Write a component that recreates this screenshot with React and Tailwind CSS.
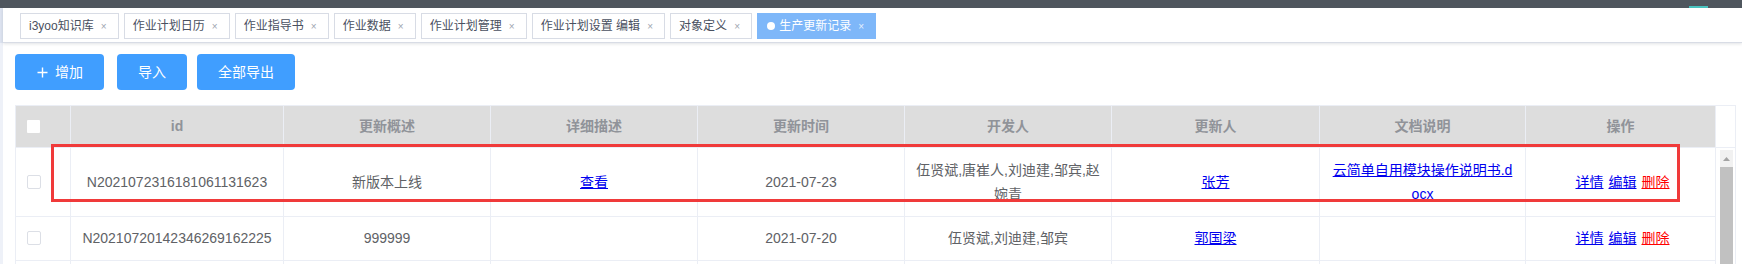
import React from "react";

const FONT = { fontFamily: '"Liberation Sans", "Noto Sans CJK SC", sans-serif' };

const tabs = [
  { label: "i3yoo知识库" },
  { label: "作业计划日历" },
  { label: "作业指导书" },
  { label: "作业数据" },
  { label: "作业计划管理" },
  { label: "作业计划设置 编辑" },
  { label: "对象定义" },
];

const COLS = "grid grid-cols-[55px_213px_207px_207px_207px_207px_208px_206px_190px]";
const headers = ["id", "更新概述", "详细描述", "更新时间", "开发人", "更新人", "文档说明", "操作"];

function Link({ children, red }) {
  return (
    <a
      href="#"
      className={
        "underline " + (red ? "text-[#ff0000]" : "text-[#0000ee]")
      }
    >
      {children}
    </a>
  );
}

function Cell({ children, h }) {
  return (
    <div className="flex items-center justify-center border-r border-b border-[#ebeef5] px-[10px] py-[10px] text-center leading-[24px] break-all">
      <span className="block w-full">{children}</span>
    </div>
  );
}

function CheckCell() {
  return (
    <div className="flex items-center border-r border-b border-[#ebeef5] pl-[11px]">
      <span className="block w-[14px] h-[14px] rounded-[2px] border border-[#dcdfe6] bg-white" />
    </div>
  );
}

function Actions() {
  return (
    <div className="flex items-center justify-center border-r border-b border-[#ebeef5] gap-[5px] pl-[4px]">
      <Link>详情</Link>
      <Link>编辑</Link>
      <Link red>删除</Link>
    </div>
  );
}

export default function App() {
  return (
    <div className="relative w-[1742px] h-[264px] overflow-hidden bg-white" style={FONT}>
      {/* top dark bar */}
      <div className="relative h-[8px] bg-[#4f565e]">
        <div className="absolute right-[34px] bottom-0 w-[19px] h-[2px] bg-[#47c2be]" />
      </div>

      <div className="flex">
        {/* left strip */}
        <div className="flex w-[3px] flex-col">
          <div className="h-[35px] bg-[#dde3f0]" />
          <div className="h-[230px] bg-[#eef1f8]" />
        </div>

        <div className="min-w-0 flex-1">
          {/* tabs bar */}
          <div className="flex h-[35px] items-start gap-[5px] border-b border-[#d8dce5] bg-white pl-[17px] pt-[5px] shadow-[0_1px_3px_0_rgba(0,21,41,0.12)]">
            {tabs.map((t) => (
              <div
                key={t.label}
                className="flex h-[26px] items-center whitespace-pre border border-[#d8dce5] bg-white pl-[8px] pr-[7px] text-[12px] text-[#495060]"
              >
                <span>{t.label}</span>
                <span className="ml-[3px] w-[14px] text-center text-[10px] text-[#a0a6b0]">×</span>
              </div>
            ))}
            <div className="flex h-[26px] items-center border border-[#7eb7f9] bg-[#7eb7f9] pl-[9px] pr-[7px] text-[12px] text-white">
              <span className="mr-[4px] block h-[8px] w-[8px] rounded-full bg-white" />
              <span>生产更新记录</span>
              <span className="ml-[3px] w-[14px] text-center text-[10px] text-[#e6f0fd]">×</span>
            </div>
          </div>

          {/* content */}
          <div className="pl-[12px]">
            {/* buttons */}
            <div className="mt-[11px] flex h-[36px] items-stretch">
              <button className="flex w-[89px] items-center rounded-[4px] bg-[#409eff] pl-[22px] text-[14px] text-white">
                <svg width="11" height="11" viewBox="0 0 11 11" className="mr-[7px]">
                  <path d="M5.5 0.5 V10.5 M0.5 5.5 H10.5" stroke="white" strokeWidth="1.4" />
                </svg>
                <span>增加</span>
              </button>
              <button className="ml-[13px] flex w-[70px] items-center justify-center rounded-[4px] bg-[#409eff] text-[14px] text-white">
                导入
              </button>
              <button className="ml-[10px] flex w-[98px] items-center justify-center rounded-[4px] bg-[#409eff] text-[14px] text-white">
                全部导出
              </button>
            </div>

            {/* table */}
            <div className="mt-[15px] w-[1721px] border-l border-t border-[#ebeef5] text-[14px] text-[#606266]">
              {/* header */}
              <div className="flex h-[42px]">
                <div className={COLS + " bg-[#dddddd]"}>
                  <div className="flex items-center border-r border-b border-[#ebeef5] pl-[11px]">
                    <span className="block h-[13px] w-[13px] rounded-[1px] bg-white" />
                  </div>
                  {headers.map((h) => (
                    <div
                      key={h}
                      className="flex items-center justify-center border-r border-b border-[#ebeef5] font-bold text-[#909399]"
                    >
                      {h}
                    </div>
                  ))}
                </div>
                <div className="w-[20px] border-r border-b border-[#ebeef5] bg-white" />
              </div>

              {/* body */}
              <div className="flex">
                <div className="flex flex-col">
                  <div className={COLS + " h-[68px]"}>
                    <CheckCell />
                    <Cell>N2021072316181061131623</Cell>
                    <Cell>新版本上线</Cell>
                    <Cell>
                      <Link>查看</Link>
                    </Cell>
                    <Cell>2021-07-23</Cell>
                    <Cell>伍贤斌,唐崔人,刘迪建,邹宾,赵婉青</Cell>
                    <Cell>
                      <Link>张芳</Link>
                    </Cell>
                    <Cell>
                      <Link>云简单自用模块操作说明书.docx</Link>
                    </Cell>
                    <Actions />
                  </div>
                  <div className={COLS + " h-[44px]"}>
                    <CheckCell />
                    <Cell>N20210720142346269162225</Cell>
                    <Cell>999999</Cell>
                    <Cell></Cell>
                    <Cell>2021-07-20</Cell>
                    <Cell>伍贤斌,刘迪建,邹宾</Cell>
                    <Cell>
                      <Link>郭国梁</Link>
                    </Cell>
                    <Cell></Cell>
                    <Actions />
                  </div>
                  <div className={COLS + " h-[44px]"}>
                    <div className="border-r border-b border-[#ebeef5]" />
                    {headers.map((h) => (
                      <div key={h} className="border-r border-b border-[#ebeef5]" />
                    ))}
                  </div>
                </div>
                {/* scrollbar gutter */}
                <div className="flex w-[20px] border-r border-[#ebeef5] bg-white pt-[2px] pl-[4px] pr-[2px]">
                  <div className="flex w-[14px] flex-col bg-[#f1f1f1]">
                    <div className="flex h-[17px] items-center justify-center">
                      <svg width="7" height="4" viewBox="0 0 7 4">
                        <path d="M0 4 L3.5 0 L7 4 Z" fill="#a3a3a3" />
                      </svg>
                    </div>
                    <div className="flex-1 bg-[#c1c1c1]" />
                  </div>
                </div>
              </div>
            </div>
          </div>
        </div>
      </div>

      {/* red annotation rectangle */}
      <div className="pointer-events-none absolute left-[51px] top-[144px] h-[58px] w-[1629px] border-[3px] border-[#f03a3a]" />
    </div>
  );
}
